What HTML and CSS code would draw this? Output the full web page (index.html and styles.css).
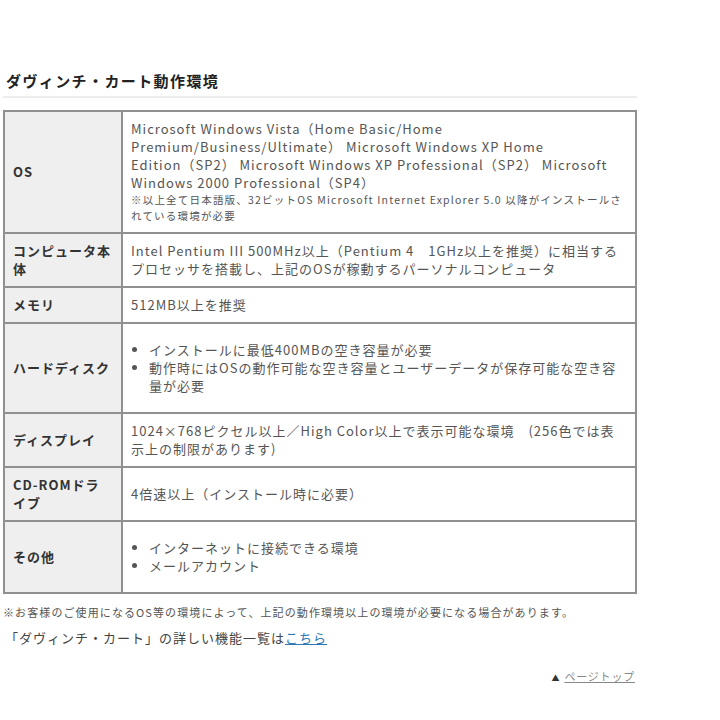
FILE: index.html
```html
<!DOCTYPE html>
<html lang="ja">
<head>
<meta charset="utf-8">
<link rel="stylesheet" href="styles.css">
</head>
<body>
<div class="page">
  <h2 class="title">ダヴィンチ・カート動作環境</h2>
  <table class="spec">
    <tr class="r-os">
      <th>OS</th>
      <td>Microsoft Windows Vista（Home Basic/Home<br>Premium/Business/Ultimate） Microsoft Windows XP Home<br>Edition（SP2） Microsoft Windows XP Professional（SP2） Microsoft<br>Windows 2000 Professional（SP4）
        <p class="note">※以上全て日本語版、32ビットOS Microsoft Internet Explorer 5.0 以降がインストールされている環境が必要</p>
      </td>
    </tr>
    <tr>
      <th>コンピュータ本体</th>
      <td>Intel Pentium III 500MHz以上（Pentium 4　1GHz以上を推奨）に相当するプロセッサを搭載し、上記のOSが稼動するパーソナルコンピュータ</td>
    </tr>
    <tr>
      <th>メモリ</th>
      <td>512MB以上を推奨</td>
    </tr>
    <tr>
      <th>ハードディスク</th>
      <td>
        <ul class="list">
          <li>インストールに最低400MBの空き容量が必要</li>
          <li>動作時にはOSの動作可能な空き容量とユーザーデータが保存可能な空き容量が必要</li>
        </ul>
      </td>
    </tr>
    <tr>
      <th>ディスプレイ</th>
      <td>1024×768ピクセル以上／High Color以上で表示可能な環境　(256色では表示上の制限があります)</td>
    </tr>
    <tr>
      <th>CD-ROMドライブ</th>
      <td>4倍速以上（インストール時に必要）</td>
    </tr>
    <tr>
      <th>その他</th>
      <td>
        <ul class="list">
          <li>インターネットに接続できる環境</li>
          <li>メールアカウント</li>
        </ul>
      </td>
    </tr>
  </table>
  <p class="footnote">※お客様のご使用になるOS等の環境によって、上記の動作環境以上の環境が必要になる場合があります。</p>
  <p class="more">「ダヴィンチ・カート」の詳しい機能一覧は<a href="#">こちら</a></p>
  <div class="totop"><span class="tri">▲</span><a href="#">ページトップ</a></div>
</div>
</body>
</html>
```

FILE: styles.css
```css
html, body {
  margin: 0;
  padding: 0;
  background: #fff;
}
body {
  font-family: "Noto Sans CJK JP", "Noto Sans", sans-serif;
  color: #444;
  font-size: 13px;
}
.page {
  width: 634px;
  padding: 70px 0 0 3px;
}
.title {
  margin: 0;
  padding: 0 0 4px 3px;
  font-size: 15px;
  line-height: 22px;
  letter-spacing: 1.4px;
  font-weight: bold;
  color: #222;
  border-bottom: 2px solid #ededed;
}
.spec {
  margin-top: 12px;
  width: 634px;
  border-collapse: collapse;
}
.spec th, .spec td {
  border: 2px solid #909090;
  padding: 8px 8px;
  line-height: 18px;
  letter-spacing: 1px;
  vertical-align: middle;
}
.spec th {
  width: 100px;
  background: #efefef;
  text-align: left;
  font-weight: bold;
  color: #333;
}
.spec td {
  color: #555;
}
.note {
  margin: 0;
  font-size: 10.5px;
  line-height: 16px;
  letter-spacing: 1.2px;
}
.list {
  margin: 9px 0;
  padding-left: 18px;
}
.list li {
  line-height: 18px;
}
.footnote {
  margin: 10px 0 0;
  font-size: 11px;
  line-height: 16px;
  letter-spacing: 1.1px;
  color: #555;
}
.more {
  margin: 8px 0 0 2px;
  line-height: 20px;
  letter-spacing: 1px;
}
.more a {
  color: #2f78b8;
}
.totop {
  margin-top: 20px;
  padding-right: 2px;
  text-align: right;
  font-size: 11px;
  letter-spacing: 0.8px;
}
.totop .tri {
  font-size: 8px;
  color: #333;
  margin-right: 4px;
}
.totop a {
  color: #888;
}
```
